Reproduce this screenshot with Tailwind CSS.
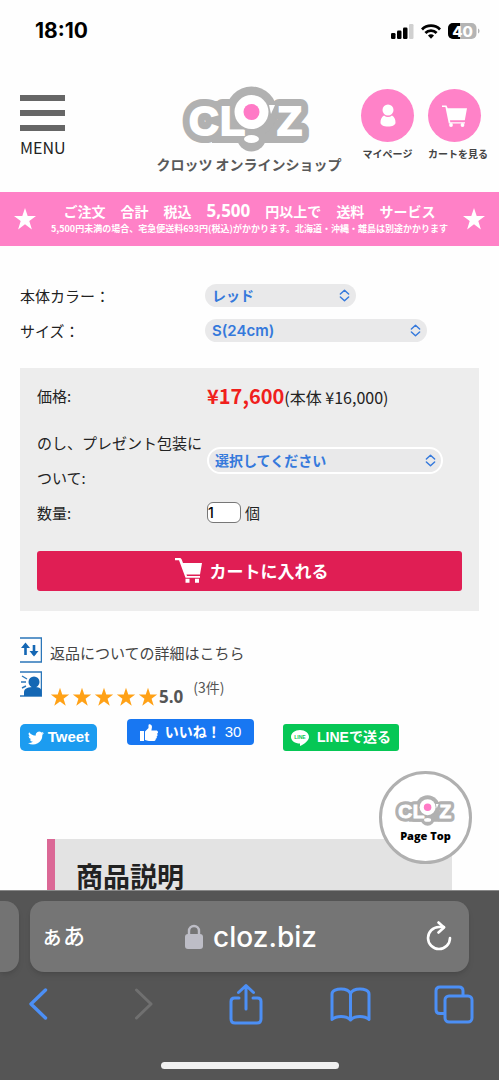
<!DOCTYPE html>
<html lang="ja">
<head>
<meta charset="utf-8">
<meta name="viewport" content="width=device-width, initial-scale=1">
<title>クロッツ オンラインショップ</title>
<script src="https://cdn.jsdelivr.net/npm/@tailwindcss/browser@4"></script>
</head>
<body class="relative flex h-screen flex-col overflow-hidden bg-[#fefefe] font-['Noto_Sans_CJK_JP',sans-serif] text-[15px] text-[#222]">

<svg class="hidden" aria-hidden="true">
  <symbol id="logo" viewBox="0 0 130 66">
    <g fill="#b1b1b1" stroke="#b1b1b1" stroke-width="16" stroke-linejoin="round" font-family="Liberation Sans, sans-serif" font-weight="700" font-size="41">
      <text x="7" y="49">C</text><text x="38" y="49">L</text><text x="95" y="49">Z</text>
    </g>
    <path d="M30 15h65v42H30z" fill="#b1b1b1"/>
    <circle cx="69.500" cy="26" r="25.500" fill="#b1b1b1"/>
    <circle cx="69.500" cy="51" r="14.500" fill="#b1b1b1"/>
    <g fill="#fff" stroke="#fff" stroke-width="2" font-family="Liberation Sans, sans-serif" font-weight="700" font-size="41">
      <text x="7" y="49">C</text><text x="38" y="49">L</text><text x="95" y="49">Z</text>
    </g>
    <circle cx="69.500" cy="26" r="19" fill="#b1b1b1"/>
    <path d="M87 19h6l-4 9z" fill="#fff"/>
    <circle cx="69.500" cy="26" r="17" fill="#fff"/>
    <circle cx="69.500" cy="26" r="8" fill="#ff7ac6"/>
    <ellipse cx="69.500" cy="53" rx="7.500" ry="4" fill="#fff"/>
  </symbol>
  <symbol id="star" viewBox="0 0 24 24"><path fill="currentColor" d="M12 1l2.700 8H23l-6.700 5 2.600 8.500L12 17.300 5.100 22.500 7.700 14 1 9h8.300z"/></symbol>
  <symbol id="updown" viewBox="0 0 12 14"><path d="M1.500 5.300 6 1.200l4.500 4.100M1.500 8.700 6 12.800l4.500-4.100" fill="none" stroke="#3579dc" stroke-width="1.600" stroke-linecap="round" stroke-linejoin="round"/></symbol>
</svg>

<div class="flex h-[62px] shrink-0 items-center justify-between pl-[35px] pr-[19px] font-[Inter,sans-serif] text-black">
  <span class="text-[21px] font-bold">18:10</span>
  <div class="flex items-center gap-[7px]">
    <svg class="h-[15px] w-[23px]" viewBox="0 0 23 15"><rect y="9" width="4.500" height="6" rx="1.200"/><rect x="6" y="6.500" width="4.500" height="8.500" rx="1.200"/><rect x="12" y="3.500" width="4.500" height="11.500" rx="1.200"/><rect x="18" width="4.500" height="15" rx="1.200" fill="#d0d0d0"/></svg>
    <svg class="h-[15px] w-5" viewBox="0 0 20 15" fill="none" stroke="#000" stroke-width="2.800"><path d="M1 5.400a12.800 12.800 0 0 1 18 0M4.400 9a8 8 0 0 1 11.200 0"/><path d="M10 14.800 7 11.600a4.200 4.200 0 0 1 6 0z" fill="#000" stroke="none"/></svg>
    <svg class="h-4 w-8" viewBox="0 0 32 16"><rect width="28.500" height="16" rx="5" fill="#b4b4b4"/><path d="M5 0h7v16H5a5 5 0 0 1-5-5V5a5 5 0 0 1 5-5z"/><path d="M30 5.500c2 .8 2 4.200 0 5z" fill="#b4b4b4"/><text x="14.500" y="13.500" text-anchor="middle" fill="#fff" font-family="Inter, sans-serif" font-size="15" font-weight="800">40</text></svg>
  </div>
</div>

<header class="flex h-[130px] shrink-0 items-start justify-between pl-5 pr-[11px]">
  <button type="button" class="mt-[33px] flex w-[45px] flex-col gap-[9px]">
    <span class="h-[6px] w-full bg-[#666]"></span>
    <span class="h-[6px] w-full bg-[#666]"></span>
    <span class="h-[6px] w-full bg-[#666]"></span>
    <span class="-mt-[5px] text-[16px] leading-[24px]">MENU</span>
  </button>
  <a href="#" class="mt-6 ml-[72px] flex flex-col items-center font-bold text-[#595959]">
    <svg class="mr-1 h-[66px] w-[130px]" role="img" aria-label="CLOZ"><use href="#logo"/></svg>
    <span class="mt-[2px] text-[14px] leading-[20px] whitespace-nowrap">クロッツ オンラインショップ</span>
  </a>
  <nav class="mt-[27px] flex gap-[14px] text-[10px] leading-[16px] font-bold text-[#444]">
    <a href="#" class="flex w-[53px] flex-col items-center gap-1 whitespace-nowrap">
      <span class="flex size-[53px] items-center justify-center rounded-full bg-[#ff82c8]">
        <svg class="h-6 w-4" viewBox="0 0 16 24" fill="#fff"><circle cx="8" cy="6" r="5.500"/><path d="M4 11.500Q8 14.500 12 11.500c2.500 1.500 3.500 4 3.500 7 0 2.500-3 4-7.500 4s-7.500-1.500-7.500-4c0-3 1-5.500 3.500-7z"/></svg>
      </span>マイページ
    </a>
    <a href="#" class="flex w-[60px] flex-col items-start gap-1 whitespace-nowrap">
      <span class="flex size-[53px] items-center justify-center rounded-full bg-[#ff82c8]">
        <svg class="h-6 w-[26px]" viewBox="0 0 26 24" fill="#fff"><path d="M0 1.500h4.500l1.200 2.700H25l-2.200 12H8l.3 2H23v1.200H6.800L3.400 3H0z"/><circle cx="9" cy="21" r="1.900"/><circle cx="20.500" cy="21" r="1.900"/></svg>
      </span>カートを見る
    </a>
  </nav>
</header>

<section class="flex h-[54px] shrink-0 items-center justify-between bg-[#ff81c7] px-[13px] text-white">
  <svg class="size-6 shrink-0"><use href="#star"/></svg>
  <div class="flex flex-col items-center pb-[3px] font-bold whitespace-nowrap">
    <p class="flex w-[372px] items-baseline justify-between text-[14px] leading-[21px]"><span>ご注文</span><span>合計</span><span>税込</span><span class="font-['Open_Sans',sans-serif] text-[17px]">5,500</span><span>円以上で</span><span>送料</span><span>サービス</span></p>
    <p class="text-[9px] leading-[13px]">5,500円未満の場合、宅急便送料693円(税込)がかかります。北海道・沖縄・離島は別途かかります</p>
  </div>
  <svg class="size-6 shrink-0"><use href="#star"/></svg>
</section>

<main class="flex min-h-0 flex-1 flex-col overflow-hidden px-5 pt-8">
  <form class="shrink-0">
    <div class="grid grid-cols-[185px_1fr] items-center leading-[35px]">
      <label for="color">本体カラー：</label>
      <span class="relative w-[151px]">
        <select id="color" class="block h-[23px] w-full appearance-none rounded-full bg-[#e9e9ea] pl-[7px] font-[Inter,'Noto_Sans_CJK_JP',sans-serif] text-[14px] leading-[23px] font-semibold text-[#3579dc]"><option>レッド</option></select>
        <svg class="pointer-events-none absolute top-[5px] right-[6px] h-[13px] w-[11px]"><use href="#updown"/></svg>
      </span>
      <label for="size">サイズ：</label>
      <span class="relative w-[222px]">
        <select id="size" class="block h-[23px] w-full appearance-none rounded-full bg-[#e9e9ea] pl-[7px] font-[Inter,sans-serif] text-[15px] leading-[23px] font-semibold text-[#3579dc]"><option>S(24cm)</option></select>
        <svg class="pointer-events-none absolute top-[5px] right-[6px] h-[13px] w-[11px]"><use href="#updown"/></svg>
      </span>
    </div>

    <div class="mt-5 bg-[#ededed] px-[17px] pt-[10px] pb-5">
      <div class="grid grid-cols-[170px_1fr] items-center leading-[35px]">
        <span class="mb-3">価格:</span>
        <span class="mb-3 flex h-[35px] items-baseline whitespace-nowrap"><strong class="text-[20px] font-bold text-[#f0201c]">¥17,600</strong><span class="text-[16px]">(本体 ¥16,000)</span></span>
        <label for="wrap" class="whitespace-nowrap">のし、プレゼント包装に<br>ついて:</label>
        <span class="relative w-[236px]">
          <select id="wrap" class="block h-[27px] w-full appearance-none rounded-full border-2 border-white bg-[#e9e9ea] pl-[6px] font-[Inter,'Noto_Sans_CJK_JP',sans-serif] text-[14px] leading-[23px] font-semibold text-[#3579dc]"><option>選択してください</option></select>
          <svg class="pointer-events-none absolute top-[7px] right-[7px] h-[13px] w-[11px]"><use href="#updown"/></svg>
        </span>
        <label for="qty">数量:</label>
        <span class="flex items-center gap-1"><input id="qty" type="text" value="1" class="h-[21px] w-[34px] rounded-[6px] border border-[#777] bg-white font-[Inter,sans-serif] text-[14px] font-medium text-black">個</span>
      </div>
      <button type="button" class="mt-[21px] flex h-10 w-full items-center justify-center gap-2 rounded-[3px] bg-[#e01e54] pl-1 text-[17px] font-bold text-white">
        <svg class="h-[26px] w-[27px]" viewBox="0 0 27 26" fill="#fff"><path d="M0 0h4.500c1.300 0 1.800.6 2.300 1.800L8 5h19l-2 11.500H11.500L12 18h13v1.800H10.500L4 2.300H0z"/><path d="M10.500 20.800h4v4h-4zM20 20.800h4v4h-4z"/></svg>
        カートに入れる
      </button>
    </div>
  </form>

  <div class="mt-[26px] flex shrink-0 items-center gap-2">
    <svg class="mb-[6px] h-[26px] w-[22px]" viewBox="0 0 22 26"><path d="M0 1h21.500v24H0" fill="none" stroke="#2b76b9" stroke-width="1.500"/><path d="M5.500 18V8M14 8v10" stroke="#1467b4" stroke-width="2.600"/><path d="M1 11 5.500 5.500 10 11zM9.500 14l4.500 5.500 4.500-5.500z" fill="#1467b4"/></svg>
    <a href="#" class="leading-[32px] text-[#444]">返品についての詳細はこちら</a>
  </div>
  <div class="mt-[2px] flex h-[36px] shrink-0 items-start text-[#555]">
    <svg class="h-[26px] w-[22px]" viewBox="0 0 22 26"><path d="M0 1h21.500v24H0" fill="none" stroke="#2b76b9" stroke-width="1.500"/><circle cx="14" cy="11" r="5.500" fill="#1467b4"/><path d="M4 25v-4c0-4 5-5 10-5s7.500 1 7.500 5v4z" fill="#1467b4"/><path d="M2 5l5 3M1 11h5M2 17l4-2" stroke="#2b76b9" stroke-width="1.400"/></svg>
    <span class="mt-4 ml-2 flex items-center gap-[2px] text-[#ffa116]">
      <svg class="size-5"><use href="#star"/></svg><svg class="size-5"><use href="#star"/></svg><svg class="size-5"><use href="#star"/></svg><svg class="size-5"><use href="#star"/></svg><svg class="size-5"><use href="#star"/></svg>
    </span>
    <strong class="mt-4 ml-[1px] font-['Open_Sans',sans-serif] text-[17px] leading-[20px] font-bold">5.0</strong>
    <a href="#" class="mt-[6px] ml-[10px] text-[14px] leading-[20px]">(3件)</a>
  </div>

  <div class="mt-3 flex shrink-0 items-start font-['Liberation_Sans','Noto_Sans_CJK_JP',sans-serif] text-[15px] font-bold text-white">
    <button type="button" class="mt-[5px] flex h-[27px] w-[77px] items-center justify-center gap-1 rounded-[5px] bg-[#1c9cf0]">
      <svg class="size-4" viewBox="0 0 24 24" fill="#fff"><path d="M24 4.600a10 10 0 0 1-2.800.8 5 5 0 0 0 2.100-2.700 10 10 0 0 1-3.100 1.200 4.900 4.900 0 0 0-8.400 4.500A14 14 0 0 1 1.700 3.200a4.900 4.900 0 0 0 1.500 6.500A4.900 4.900 0 0 1 1 9.100a4.900 4.900 0 0 0 3.900 4.900 5 5 0 0 1-2.200.1 4.900 4.900 0 0 0 4.600 3.400A9.900 9.900 0 0 1 0 19.500a14 14 0 0 0 21.500-12.400A10 10 0 0 0 24 4.600z"/></svg>Tweet
    </button>
    <button type="button" class="ml-[30px] flex h-[26px] w-[127px] items-center justify-center rounded-[4px] bg-[#1877f2] text-[14px] whitespace-nowrap">
      <svg class="mr-[7px] h-[17px] w-[18px]" viewBox="0 0 18 17" fill="#fff"><path d="M0 7h4v10H0zM5 7.500 8.500 4V1.200C8.500-.4 12-.2 12 3l-.6 3.500H16c2.500 0 2.500 2.700 1 3.200 1 1 .6 2.400-.4 2.800.6 1 .1 2-.9 2.300.2 1.400-.7 2.200-2.200 2.200H9c-2 0-2.500-1-4-1z"/></svg>
      いいね！<span class="ml-1 text-[15px] font-normal">30</span>
    </button>
    <button type="button" class="mt-[5px] ml-[29px] flex h-[27px] w-[116px] items-center justify-center gap-2 rounded-[3px] bg-[#06c755] text-[14px] whitespace-nowrap">
      <svg class="h-4 w-[18px]" viewBox="0 0 18 16"><path d="M9 0c5 0 9 3 9 7 0 3.500-4.500 7-9 9v-2.500c-5 0-9-2.700-9-6.500s4-7 9-7z" fill="#fff"/><text x="9" y="8.500" text-anchor="middle" font-family="Liberation Sans, sans-serif" font-size="5" font-weight="700" fill="#06c755">LINE</text></svg>LINEで送る
    </button>
  </div>

  <h2 class="mx-[27px] mt-[88px] h-20 shrink-0 border-l-8 border-[#db6896] bg-[#e3e3e3] pl-[21px] text-[27px] leading-[74px] font-bold">商品説明</h2>
</main>

<a href="#" class="absolute right-[27px] bottom-[216px] flex size-[93px] flex-col items-center justify-center rounded-full border-[3px] border-[#b0b0b0] bg-white font-['Open_Sans',sans-serif] text-[11px] leading-[16px] font-extrabold text-black">
  <svg class="mt-[3px] h-[31px] w-[61px]" role="img" aria-label="CLOZ"><use href="#logo"/></svg>
  <span class="mt-[2px]">Page Top</span>
</a>

<footer class="relative flex h-[190px] shrink-0 flex-col border-t border-[#888] bg-[#555] pt-[10px] font-[Inter,'Noto_Sans_CJK_JP',sans-serif]">
  <div class="flex h-[71px] gap-[11px]">
    <div class="w-[19px] rounded-r-[14px] bg-[#737373] shadow-md"></div>
    <div class="mr-[30px] flex flex-1 items-center justify-between rounded-[14px] bg-[#757575] pr-4 pl-[11px] text-white shadow-md">
      <button type="button" class="w-12 text-left text-[22px] font-medium">ぁあ</button>
      <a href="#" class="flex items-center gap-[10px] text-[28px] font-medium">
        <svg class="h-[25px] w-[18px]" viewBox="0 0 18 25"><rect y="10" width="18" height="15" rx="3" fill="#bdbdc6"/><path d="M4 11V7a5 5 0 0 1 10 0v4" fill="none" stroke="#bdbdc6" stroke-width="2.400"/></svg>cloz.biz
      </a>
      <button type="button" aria-label="再読み込み" class="flex w-10 justify-end"><svg class="h-[32px] w-[28px]" viewBox="0 0 28 32" fill="none" stroke="#fff" stroke-width="2.600" stroke-linecap="round" stroke-linejoin="round"><path d="M25 17a11 11 0 1 1-11-11h5"/><path d="M13.500 1.500 19 6.500l-5.500 5"/></svg></button>
    </div>
  </div>
  <nav class="flex h-16 items-center justify-between pr-6 pl-[17px] text-[#4c8ff5]">
    <button type="button" aria-label="戻る" class="flex w-[42px] justify-center"><svg class="h-8 w-5" viewBox="0 0 20 32" fill="none" stroke="currentColor" stroke-width="3.400" stroke-linecap="round" stroke-linejoin="round"><path d="M17.500 2 3 16l14.500 14"/></svg></button>
    <button type="button" aria-label="進む" class="flex w-[42px] justify-center pl-1 text-[#707070]"><svg class="h-8 w-5" viewBox="0 0 20 32" fill="none" stroke="currentColor" stroke-width="3" stroke-linecap="round" stroke-linejoin="round"><path d="M2.500 2 17 16 2.500 30"/></svg></button>
    <button type="button" aria-label="共有" class="flex w-[42px] justify-center"><svg class="h-[42px] w-[34px]" viewBox="0 0 34 42" fill="none" stroke="currentColor" stroke-width="3" stroke-linecap="round" stroke-linejoin="round"><path d="M10 15H5.500Q2 15 2 18.500V36q0 4 4 4h22q4 0 4-4V18.500Q32 15 28.500 15H24M17 26V2.500M9.500 9.500 17 2.500l7.500 7"/></svg></button>
    <button type="button" aria-label="ブックマーク" class="flex w-[42px] justify-center"><svg class="h-[35px] w-[41px]" viewBox="0 0 41 35" fill="none" stroke="currentColor" stroke-width="3" stroke-linejoin="round"><path d="M20.500 6.500C19 3.500 15 2 11 2S2 3.500 2 7v25.500c2-2 5-3 9-3s7.500 1 9.500 3.500c2-2.500 5.500-3.500 9.500-3.500s7 1 9 3V7c0-3.500-5-5-9-5s-8 1.500-9.500 4.500zM20.500 6.500V33"/></svg></button>
    <button type="button" aria-label="タブ" class="flex w-[42px] justify-center"><svg class="h-[39px] w-[40px]" viewBox="0 0 40 39" fill="none" stroke="currentColor" stroke-width="3"><rect x="11" y="11" width="27" height="26" rx="4"/><path d="M11 28.500H6q-4 0-4-4V6q0-4 4-4h19q4 0 4 4v5"/></svg></button>
  </nav>
  <div class="mx-auto mt-[26px] h-[7px] w-[178px] rounded-full bg-[#f0f0f0]"></div>
</footer>
</body>
</html>
